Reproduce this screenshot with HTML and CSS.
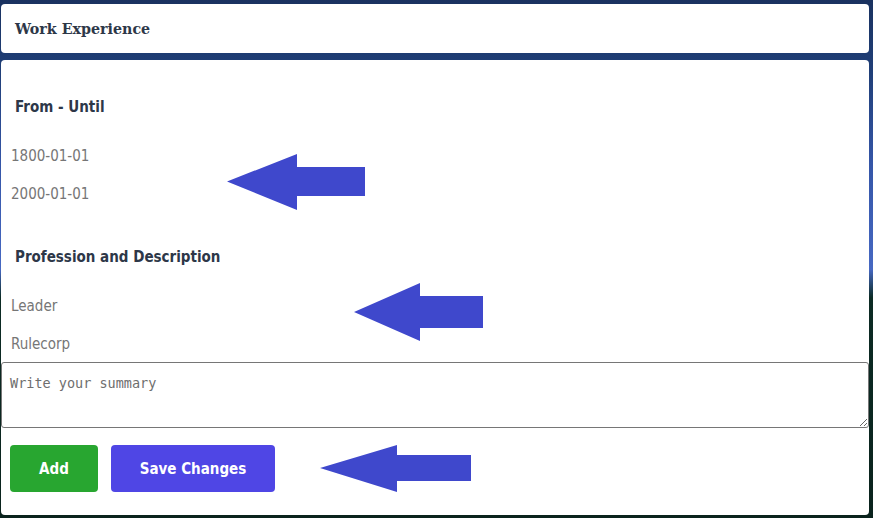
FILE: index.html
```html
<!DOCTYPE html>
<html lang="en">
<head>
<meta charset="utf-8">
<title>Work Experience</title>
<link rel="stylesheet" href="styles.css">
</head>
<body>
<div class="page">
  <div class="card title-card">
    <h2 class="card-title">Work Experience</h2>
  </div>
  <div class="card form-card">
    <h3 class="section-heading first">From - Until</h3>
    <p class="value">1800-01-01</p>
    <p class="value">2000-01-01</p>
    <h3 class="section-heading second">Profession and Description</h3>
    <p class="value">Leader</p>
    <p class="value">Rulecorp</p>
    <textarea class="summary" placeholder="Write your summary"></textarea>
    <div class="actions">
      <button class="btn btn-add">Add</button>
      <button class="btn btn-save">Save Changes</button>
    </div>
  </div>
  <svg class="arrows" viewBox="0 0 873 518" width="873" height="518" aria-hidden="true">
    <polygon points="227,181.5 297,154 297,167 365,167 365,196 297,196 297,210"/>
    <polygon points="354,312 420,283 420,296 483,296 483,328 420,328 420,341"/>
    <polygon points="320,468 397,445 397,455 471,455 471,481 397,481 397,492"/>
  </svg>
</div>
</body>
</html>
```

FILE: styles.css
```css
* { box-sizing: border-box; }

html, body {
  margin: 0;
  padding: 0;
  width: 873px;
  height: 518px;
  overflow: hidden;
}

body {
  background: linear-gradient(180deg, #1a3260 0%, #203f78 14%, #3556a8 32%, #4668c2 52%, #0c2b24 57.5%, #0a231d 100%);
  font-family: "DejaVu Sans Condensed", "DejaVu Sans", sans-serif;
  font-stretch: semi-condensed;
}

.page {
  position: relative;
  display: flex;
  flex-direction: column;
  gap: 7px;
  padding: 4px 4px 3px 1px;
  height: 518px;
}

.card {
  background: #ffffff;
  border-radius: 4px;
}

.title-card {
  height: 49px;
  display: flex;
  align-items: center;
  padding-left: 14px;
}

.card-title {
  margin: 0;
  font-family: "DejaVu Serif", "Liberation Serif", serif;
  font-stretch: normal;
  font-size: 14.25px;
  font-weight: bold;
  color: #2d3748;
}

.form-card {
  flex: 1;
  display: flex;
  flex-direction: column;
  padding-top: 37px;
}

.section-heading {
  margin: 0;
  padding-left: 14px;
  font-size: 15px;
  line-height: 20px;
  font-weight: bold;
  color: #2d3748;
}

.section-heading.second {
  margin-top: 43px;
}

.value {
  margin: 0;
  padding-left: 10px;
  font-size: 15px;
  line-height: 20px;
  color: #767676;
}

.section-heading + .value {
  margin-top: 29px;
}

.value + .value {
  margin-top: 18px;
}

.summary {
  margin-top: 8px;
  width: 100%;
  height: 66px;
  border: 1px solid #767676;
  border-radius: 3px;
  padding: 12px 8px;
  font-family: "DejaVu Sans Mono", "Liberation Mono", monospace;
  font-stretch: normal;
  font-size: 13.5px;
  color: #333;
  resize: vertical;
}

.summary::placeholder {
  color: #6e6e6e;
}

.actions {
  display: flex;
  gap: 13px;
  margin-top: 17px;
  padding-left: 9px;
}

.btn {
  height: 47px;
  border: none;
  border-radius: 4px;
  color: #ffffff;
  font-family: "DejaVu Sans Condensed", "DejaVu Sans", sans-serif;
  font-stretch: semi-condensed;
  font-size: 15px;
  font-weight: bold;
}

.btn-add {
  width: 88px;
  background: #28a630;
}

.btn-save {
  width: 164px;
  background: #4f46e5;
}

.arrows {
  position: absolute;
  top: 0;
  left: 0;
  pointer-events: none;
}

.arrows polygon {
  fill: #3f48cc;
}
```
